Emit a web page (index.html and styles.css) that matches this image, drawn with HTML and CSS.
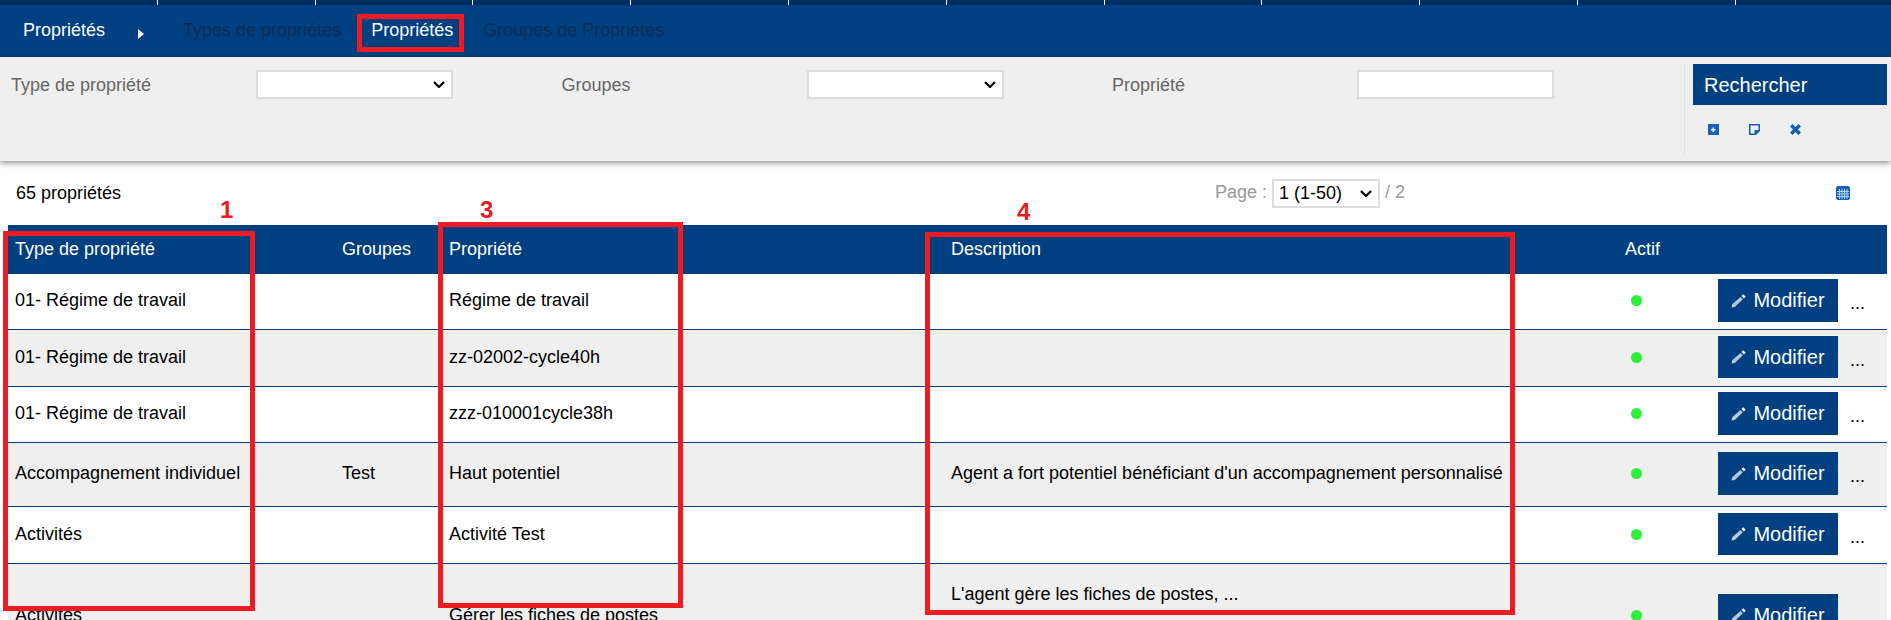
FILE: index.html
```html
<!DOCTYPE html>
<html lang="fr">
<head>
<meta charset="utf-8">
<title>Propriétés</title>
<link rel="stylesheet" href="styles.css">
</head>
<body>
<svg class="defs" width="0" height="0">
  <symbol id="pen" viewBox="0 0 15 14">
    <path class="pen-body" d="M0.500 13.500 1.200 10.300 9.500 3 11.800 5.300 3.800 13zM5.500 7.500l.8.800M3 10l.8.800"/>
    <path class="pen-tip" d="M10.500 2 12.300 .3 14.700 2.700 12.900 4.400z"/>
  </symbol>
</svg>
<div class="topstrip">
  <span></span><span></span><span></span><span></span><span></span><span></span><span></span><span></span><span></span><span></span><span></span><span></span>
</div>
<nav class="nav">
  <span class="nav-title">Propriétés</span>
  <span class="nav-arrow"></span>
  <a class="nav-link">Types de propriétés</a>
  <a class="nav-link active">Propriétés</a>
  <a class="nav-link">Groupes de Propriétés</a>
</nav>
<section class="filters">
  <div class="fields">
    <div class="field"><label>Type de propriété</label><select class="ctl"><option></option></select></div>
    <div class="field"><label>Groupes</label><select class="ctl"><option></option></select></div>
    <div class="field"><label>Propriété</label><input class="ctl" type="text"></div>
  </div>
  <aside class="search">
    <div class="search-title">Rechercher</div>
    <div class="search-icons">
      <svg viewBox="0 0 11 11" width="11" height="11"><path class="ic" fill-rule="evenodd" d="M0 0h11v11H0zM4.500 3.500v1.500H3v1.500h1.500V8H6V6.500h1.500V5H6V3.500z"/></svg>
      <svg viewBox="0 0 11 11" width="11" height="11"><path class="ic" fill-rule="evenodd" d="M0 0h11v7l-4 4H0zM1.500 1.500v8h4V6h4V1.500z"/></svg>
      <svg viewBox="0 0 11 11" width="11" height="11"><path class="ic" d="M2.500 0 5.500 3 8.500 0 11 2.500 8 5.500l3 3L8.500 11l-3-3-3 3L0 8.500l3-3-3-3z"/></svg>
    </div>
  </aside>
</section>
<div class="pager">
  <span class="count">65 propriétés</span>
  <span class="pages">Page : <select class="page-select"><option>1 (1-50)</option></select> / 2</span>
  <svg class="grid-icon" viewBox="0 0 14 14" width="14" height="14"><rect class="ic" width="14" height="14" rx="2"/><path d="M1 5.500h12M1 8h12M1 10.500h12M3.500 3v10M6 3v10M8.500 3v10M11 3v10" stroke="#b9d2ee" stroke-width="1" fill="none"/></svg>
</div>
<table class="grid">
  <colgroup><col class="c1"><col class="c2"><col class="c3"><col class="c4"><col class="c5"><col class="c6"></colgroup>
  <thead>
    <tr><th>Type de propriété</th><th>Groupes</th><th>Propriété</th><th class="desc">Description</th><th>Actif</th><th></th></tr>
  </thead>
  <tbody>
    <tr class="r56">
      <td>01- Régime de travail</td><td></td><td>Régime de travail</td><td class="desc"></td>
      <td><span class="dot"></span></td>
      <td><div class="actions"><button class="edit"><svg width="15" height="14"><use href="#pen"/></svg>Modifier</button><span class="more">...</span></div></td>
    </tr>
    <tr class="r57">
      <td>01- Régime de travail</td><td></td><td>zz-02002-cycle40h</td><td class="desc"></td>
      <td><span class="dot"></span></td>
      <td><div class="actions"><button class="edit"><svg width="15" height="14"><use href="#pen"/></svg>Modifier</button><span class="more">...</span></div></td>
    </tr>
    <tr class="r56">
      <td>01- Régime de travail</td><td></td><td>zzz-010001cycle38h</td><td class="desc"></td>
      <td><span class="dot"></span></td>
      <td><div class="actions"><button class="edit"><svg width="15" height="14"><use href="#pen"/></svg>Modifier</button><span class="more">...</span></div></td>
    </tr>
    <tr class="r64">
      <td>Accompagnement individuel</td><td>Test</td><td>Haut potentiel</td><td class="desc">Agent a fort potentiel bénéficiant d'un accompagnement personnalisé</td>
      <td><span class="dot"></span></td>
      <td><div class="actions"><button class="edit"><svg width="15" height="14"><use href="#pen"/></svg>Modifier</button><span class="more">...</span></div></td>
    </tr>
    <tr class="r57">
      <td>Activités</td><td></td><td>Activité Test</td><td class="desc"></td>
      <td><span class="dot"></span></td>
      <td><div class="actions"><button class="edit"><svg width="15" height="14"><use href="#pen"/></svg>Modifier</button><span class="more">...</span></div></td>
    </tr>
    <tr class="r105">
      <td>Activités</td><td></td><td>Gérer les fiches de postes</td><td class="desc">L'agent gère les fiches de postes, ...<br>&nbsp;<br>&nbsp;</td>
      <td><span class="dot"></span></td>
      <td><div class="actions"><button class="edit"><svg width="15" height="14"><use href="#pen"/></svg>Modifier</button><span class="more">...</span></div></td>
    </tr>
  </tbody>
</table>
<div class="mark box-nav"></div>
<div class="mark box-1"></div>
<div class="mark box-3"></div>
<div class="mark box-4"></div>
<span class="num num-1">1</span>
<span class="num num-3">3</span>
<span class="num num-4">4</span>
</body>
</html>
```
FILE: styles.css
```css
* { box-sizing: border-box; }
html, body { height: 620px; overflow: hidden; }
body { margin: 0; position: relative; font-family: "Liberation Sans", Arial, sans-serif; font-size: 18px; color: #000; background: #fff; }
.defs { display: block; height: 0; }

.topstrip { display: grid; grid-template-columns: repeat(12, 157.8px); height: 5px; background: #002d62; overflow: hidden; }
.topstrip span { border-right: 1px solid #fff; }
.topstrip span:last-child { border-right: 0; }

.nav { display: flex; align-items: center; height: 52px; padding: 0 0 2px 23px; background: #004080; }
.nav-title { color: #fff; }
.nav-arrow { width: 0; height: 0; margin: 8px 0 0 33px; border-style: solid; border-width: 5px 0 5px 6px; border-color: transparent transparent transparent #fff; }
.nav-link { color: #0b2c57; }
.nav-arrow + .nav-link { margin-left: 39px; }
.nav-link.active { color: #fff; margin-left: 30px; }
.nav-link.active + .nav-link { margin-left: 30px; }

.filters { position: relative; display: flex; height: 104px; background: #efefef; box-shadow: 0 2px 6px rgba(0,0,0,.45); }
.fields { display: grid; grid-template-columns: repeat(3, 550.5px); width: 1684px; padding: 13px 0 0 11px; align-content: start; }
.field { display: flex; align-items: center; height: 29px; }
.field label { width: 245px; padding-top: 2px; color: #666; }
.ctl { width: 197px; height: 29px; border: 2px solid #ddd; background-color: #fff; border-radius: 0; font: inherit; color: #000; padding: 0; }
select.ctl, .page-select {
  appearance: none;
  background-image: url("data:image/svg+xml,%3Csvg xmlns='http://www.w3.org/2000/svg' width='12' height='7'%3E%3Cpath d='M1 1l5 5 5-5' fill='none' stroke='%23000' stroke-width='2.200'/%3E%3C/svg%3E");
  background-repeat: no-repeat;
  background-position: right 6px center;
}
.search { margin: 7px 0; width: 207px; height: 90px; padding-left: 8px; border-left: 1px solid #e0e0e0; }
.search-title { width: 194px; height: 41px; padding-left: 11px; line-height: 43px; background: #004080; color: #fff; font-size: 20px; }
.search-icons { display: flex; gap: 30px; padding: 19px 0 0 15px; }
.search-icons svg { display: block; }
.ic { fill: #1462b4; }

.pager { position: relative; display: grid; grid-template-columns: 1199px 621px 14px; align-items: center; height: 64px; padding-left: 16px; }
.pages { color: #999; white-space: nowrap; }
.page-select { width: 108px; height: 29px; margin: 0; border: 2px solid #ddd; background-color: #fff; font: inherit; color: #000; border-radius: 0; padding: 0 0 0 5px; vertical-align: middle; }
.grid-icon { display: block; }

.grid { width: 1879px; margin-left: 8px; border-collapse: separate; border-spacing: 0; table-layout: fixed; }
.c1 { width: 334px; } .c2 { width: 107px; } .c3 { width: 501px; } .c4 { width: 675px; } .c5 { width: 93px; } .c6 { width: 169px; }
.grid th { height: 49px; padding: 0 0 0 7px; background: #004080; color: #fff; font-weight: 400; text-align: left; }
.grid td { padding: 0 0 2px 7px; vertical-align: middle; border-bottom: 1px solid #004080; }
.grid tbody tr:nth-child(even) td { background: #efefef; }
.grid th:nth-child(2), .grid td:nth-child(2), .grid th:nth-child(3), .grid td:nth-child(3) { padding-left: 0; }
.grid th.desc, .grid td.desc { padding-left: 1px; }
.grid th:nth-child(5) { padding-left: 0; }
.grid td:nth-child(5) { padding-left: 6px; }
.grid th:nth-child(6), .grid td:nth-child(6) { padding-left: 0; }
.r56 { height: 56px; } .r57 { height: 57px; } .r64 { height: 64px; } .r105 { height: 105px; }
.dot { display: block; width: 11px; height: 11px; border-radius: 50%; background: #2cf03a; }
.actions { display: flex; align-items: center; }
.edit { display: flex; align-items: center; justify-content: center; gap: 7px; width: 120px; height: 42.6px; border: 0; padding: 0; background: #004080; color: #fff; font: 20px "Liberation Sans", Arial, sans-serif; }
.pen-body { fill: #bcc8d8; }
.pen-tip { fill: #f4f6f9; }
.more { margin: 6px 0 0 12px; }

.mark { position: absolute; border: 5px solid #ed1c24; }
.box-nav { left: 357px; top: 14px; width: 107px; height: 38px; }
.box-1 { left: 3px; top: 231px; width: 252px; height: 380px; }
.box-3 { left: 438px; top: 222px; width: 245px; height: 386px; }
.box-4 { left: 925px; top: 232px; width: 590px; height: 383px; }
.num { position: absolute; color: #ed1c24; font-size: 24px; font-weight: 700; line-height: 24px; }
.num-1 { left: 220px; top: 198px; }
.num-3 { left: 480px; top: 198px; }
.num-4 { left: 1017px; top: 200px; }
```
